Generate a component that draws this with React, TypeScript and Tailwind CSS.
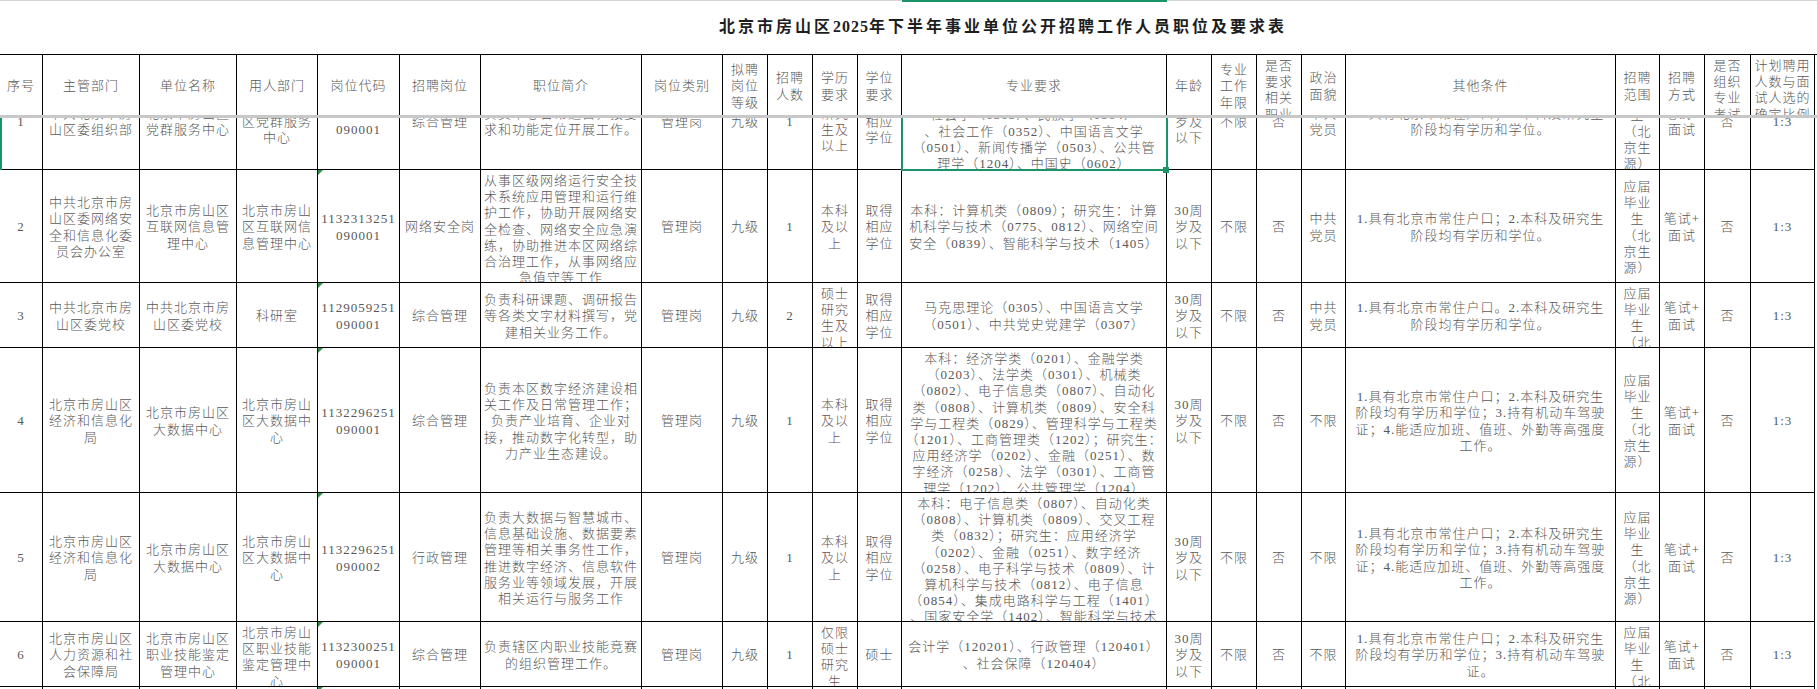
import clsx from 'clsx'

// column widths measured from the sheet, border to border
const GRID =
  'grid grid-cols-[43px_97px_97px_81px_82px_81px_161px_81px_45px_45px_45px_44px_265px_45px_45px_45px_44px_270px_44px_45px_46px_64px]'

const HEAD = [
  '序号',
  '主管部门',
  '单位名称',
  '用人部门',
  '岗位代码',
  '招聘岗位',
  '职位简介',
  '岗位类别',
  '拟聘\n岗位\n等级',
  '招聘\n人数',
  '学历\n要求',
  '学位\n要求',
  '专业要求',
  '年龄',
  '专业\n工作\n年限',
  '是否\n要求\n相关\n职业',
  '政治\n面貌',
  '其他条件',
  '招聘\n范围',
  '招聘\n方式',
  '是否\n组织\n专业\n考试',
  '计划聘用\n人数与面\n试人选的\n确定比例',
]

const OTHER_2 = '1.具有北京市常住户口；2.本科及研究生\n阶段均有学历和学位。'
const OTHER_4 =
  '1.具有北京市常住户口；2.本科及研究生\n阶段均有学历和学位；3.持有机动车驾驶\n证；4.能适应加班、值班、外勤等高强度\n工作。'
const SCOPE = '应届\n毕业\n生\n（北\n京生\n源）'

interface RowData {
  h: string
  cells: string[]
}

const ROWS: RowData[] = [
  {
    h: 'h-[98px]',
    cells: [
      '1',
      '中共北京市房\n山区委组织部',
      '北京市房山区\n党群服务中心',
      '北京市房山\n区党群服务\n中心',
      '1132301251\n090001',
      '综合管理',
      '负责中心日常运营，按要\n求和功能定位开展工作。',
      '管理岗',
      '九级',
      '1',
      '硕士\n研究\n生及\n以上',
      '取得\n相应\n学位',
      '本科：哲学类（0101）、政治学类（0302）\n马克思主义理论类（0305）；研究生：\n社会学（0303）、民族学（0304）\n、社会工作（0352）、中国语言文学\n（0501）、新闻传播学（0503）、公共管\n理学（1204）、中国史（0602）',
      '30周\n岁及\n以下',
      '不限',
      '否',
      '中共\n党员',
      OTHER_2,
      SCOPE,
      '笔试+\n面试',
      '否',
      '1:3',
    ],
  },
  {
    h: 'h-[113px]',
    cells: [
      '2',
      '中共北京市房\n山区委网络安\n全和信息化委\n员会办公室',
      '北京市房山区\n互联网信息管\n理中心',
      '北京市房山\n区互联网信\n息管理中心',
      '1132313251\n090001',
      '网络安全岗',
      '从事区级网络运行安全技\n术系统应用管理和运行维\n护工作，协助开展网络安\n全检查、网络安全应急演\n练，协助推进本区网络综\n合治理工作，从事网络应\n急值守等工作',
      '管理岗',
      '九级',
      '1',
      '本科\n及以\n上',
      '取得\n相应\n学位',
      '本科：计算机类（0809）；研究生：计算\n机科学与技术（0775、0812）、网络空间\n安全（0839）、智能科学与技术（1405）',
      '30周\n岁及\n以下',
      '不限',
      '否',
      '中共\n党员',
      OTHER_2,
      SCOPE,
      '笔试+\n面试',
      '否',
      '1:3',
    ],
  },
  {
    h: 'h-[65px]',
    cells: [
      '3',
      '中共北京市房\n山区委党校',
      '中共北京市房\n山区委党校',
      '科研室',
      '1129059251\n090001',
      '综合管理',
      '负责科研课题、调研报告\n等各类文字材料撰写，党\n建相关业务工作。',
      '管理岗',
      '九级',
      '2',
      '硕士\n研究\n生及\n以上',
      '取得\n相应\n学位',
      '马克思理论（0305）、中国语言文学\n（0501）、中共党史党建学（0307）',
      '30周\n岁及\n以下',
      '不限',
      '否',
      '中共\n党员',
      '1.具有北京市常住户口。2.本科及研究生\n阶段均有学历和学位。',
      SCOPE,
      '笔试+\n面试',
      '否',
      '1:3',
    ],
  },
  {
    h: 'h-[145px]',
    cells: [
      '4',
      '北京市房山区\n经济和信息化\n局',
      '北京市房山区\n大数据中心',
      '北京市房山\n区大数据中\n心',
      '1132296251\n090001',
      '综合管理',
      '负责本区数字经济建设相\n关工作及日常管理工作；\n负责产业培育、企业对\n接，推动数字化转型，助\n力产业生态建设。',
      '管理岗',
      '九级',
      '1',
      '本科\n及以\n上',
      '取得\n相应\n学位',
      '本科：经济学类（0201）、金融学类\n（0203）、法学类（0301）、机械类\n（0802）、电子信息类（0807）、自动化\n类（0808）、计算机类（0809）、安全科\n学与工程类（0829）、管理科学与工程类\n（1201）、工商管理类（1202）；研究生：\n应用经济学（0202）、金融（0251）、数\n字经济（0258）、法学（0301）、工商管\n理学（1202）、公共管理学（1204）',
      '30周\n岁及\n以下',
      '不限',
      '否',
      '不限',
      OTHER_4,
      SCOPE,
      '笔试+\n面试',
      '否',
      '1:3',
    ],
  },
  {
    h: 'h-[129px]',
    cells: [
      '5',
      '北京市房山区\n经济和信息化\n局',
      '北京市房山区\n大数据中心',
      '北京市房山\n区大数据中\n心',
      '1132296251\n090002',
      '行政管理',
      '负责大数据与智慧城市、\n信息基础设施、数据要素\n管理等相关事务性工作，\n推进数字经济、信息软件\n服务业等领域发展，开展\n相关运行与服务工作',
      '管理岗',
      '九级',
      '1',
      '本科\n及以\n上',
      '取得\n相应\n学位',
      '本科：电子信息类（0807）、自动化类\n（0808）、计算机类（0809）、交叉工程\n类（0832）；研究生：应用经济学\n（0202）、金融（0251）、数字经济\n（0258）、电子科学与技术（0809）、计\n算机科学与技术（0812）、电子信息\n（0854）、集成电路科学与工程（1401）\n、国家安全学（1402）、智能科学与技术\n（1405）',
      '30周\n岁及\n以下',
      '不限',
      '否',
      '不限',
      OTHER_4,
      SCOPE,
      '笔试+\n面试',
      '否',
      '1:3',
    ],
  },
  {
    h: 'h-[65px]',
    cells: [
      '6',
      '北京市房山区\n人力资源和社\n会保障局',
      '北京市房山区\n职业技能鉴定\n管理中心',
      '北京市房山\n区职业技能\n鉴定管理中\n心',
      '1132300251\n090001',
      '综合管理',
      '负责辖区内职业技能竞赛\n的组织管理工作。',
      '管理岗',
      '九级',
      '1',
      '仅限\n硕士\n研究\n生',
      '硕士',
      '会计学（120201）、行政管理（120401）\n、社会保障（120404）',
      '30周\n岁及\n以下',
      '不限',
      '否',
      '不限',
      '1.具有北京市常住户口；2.本科及研究生\n阶段均有学历和学位；3.持有机动车驾驶\n证。',
      SCOPE,
      '笔试+\n面试',
      '否',
      '1:3',
    ],
  },
  {
    h: 'h-[40px]',
    cells: Array(22).fill(''),
  },
]

function Cell({ text, idx, body }: { text: string; idx: number; body?: boolean }) {
  return (
    <div
      className={clsx(
        'relative flex flex-col items-center overflow-hidden border-r border-black pt-[3px] text-center [justify-content:safe_center]',
        body && 'border-b',
        body && idx === 10 && 'text-[#6e5252]'
      )}
    >
      {body && idx === 4 && (
        <span className="absolute left-0 top-0 h-0 w-0 border-r-[5px] border-t-[5px] border-r-transparent border-t-[#2f8f46]" />
      )}
      {text.split('\n').map((line, i) => (
        <div key={i} className="whitespace-nowrap">
          {line}
        </div>
      ))}
    </div>
  )
}

export default function App() {
  return (
    <div className="relative h-[689px] w-[1817px] overflow-hidden bg-white font-['Liberation_Serif','Noto_Sans_CJK_SC',serif] text-[13px] font-light leading-[16.2px] tracking-[1px] text-[#585858]">
      {/* title row */}
      <div className="relative flex h-[54px] items-center border-t border-[#d4d4d4] pl-[719px]">
        <span className="absolute left-[902px] top-[-1px] h-[2px] w-[265px] bg-[#1a9466]" />
        <h1 className="text-[16px] font-bold tracking-[3px] text-[#1e1e1e]">
          北京市房山区<span className="tracking-[1px]">2025</span>年下半年事业单位公开招聘工作人员职位及要求表
        </h1>
      </div>

      {/* header row */}
      <div className={clsx(GRID, 'h-[61px] border-t border-black')}>
        {HEAD.map((t, i) => (
          <Cell key={i} text={t} idx={i} />
        ))}
      </div>
      <div className="h-[3px] bg-[#c8c8c8]" />

      {/* body, scrolled so that row 1 hides under the frozen header */}
      <div className="relative h-[571px] overflow-hidden">
        <div className="-mt-[46px]">
          {ROWS.map((row, r) => (
            <div key={r} className={clsx(GRID, row.h)}>
              {row.cells.map((c, i) => (
                <Cell key={i} text={c} idx={i} body />
              ))}
            </div>
          ))}
        </div>
        <span className="absolute left-0 top-0 h-[52px] w-[2px] bg-[#1a9466]" />
        <div className="absolute left-[901px] top-0 h-[53px] w-[267px] border-2 border-t-0 border-[#1a9466]" />
        <span className="absolute left-[1163px] top-[49px] h-[6px] w-[6px] bg-[#1a9466]" />
      </div>
    </div>
  )
}
